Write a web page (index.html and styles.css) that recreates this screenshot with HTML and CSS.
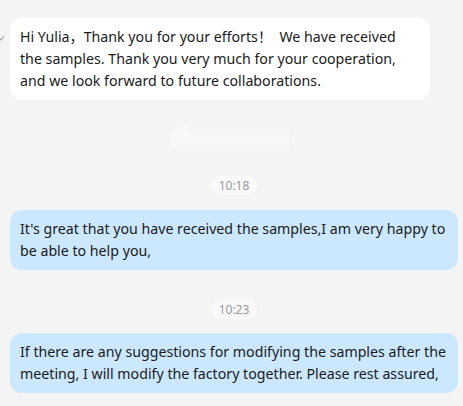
FILE: index.html
```html
<!DOCTYPE html>
<html>
<head>
<meta charset="utf-8">
<link rel="stylesheet" href="styles.css">
</head>
<body>
<div class="chat">
  <div class="row row-first">
    <div class="gutter"><svg class="caret" width="6" height="10" viewBox="0 0 6 10"><path d="M-2 3 L1 7 L4 3" fill="none" stroke="#aaa" stroke-width="1.2"/></svg></div>
    <div class="bubble in">Hi Yulia，Thank you for your efforts！&nbsp; We have received<br>the samples. Thank you very much for your cooperation,<br>and we look forward to future collaborations.</div>
  </div>
  <div class="ghost"><span class="ghost-tab"></span></div>
  <div class="time"><span>10:18</span></div>
  <div class="row">
    <div class="gutter"></div>
    <div class="bubble out">It's great that you have received the samples,I am very happy to<br>be able to help you,</div>
  </div>
  <div class="time time2"><span>10:23</span></div>
  <div class="row">
    <div class="gutter"></div>
    <div class="bubble out">If there are any suggestions for modifying the samples after the<br>meeting, I will modify the factory together. Please rest assured,</div>
  </div>
</div>
</body>
</html>
```
FILE: styles.css
```css
html, body {
  margin: 0;
  padding: 0;
  background: #f4f4f4;
}
body {
  width: 463px;
  height: 406px;
  overflow: hidden;
  font-family: "Noto Sans", "Noto Sans CJK SC", sans-serif;
  color: #1a1a1a;
}
.chat {
  display: flex;
  flex-direction: column;
  padding-top: 18px;
}
.row {
  display: flex;
}
.gutter {
  width: 10px;
  flex: none;
  position: relative;
}
.caret {
  position: absolute;
  left: 0;
  top: 15px;
}
.bubble {
  font-size: 14.2px;
  line-height: 22px;
  padding: 8px 10px;
  border-radius: 12px;
  white-space: nowrap;
}
.in {
  background: #ffffff;
  width: 400px;
}
.out {
  background: #cce8fe;
  width: 428px;
}
.ghost {
  align-self: center;
  margin-top: 30px;
  width: 120px;
  height: 20px;
  background: #f7f7f7;
  margin-left: -3px;
  position: relative;
}
.ghost-tab {
  position: absolute;
  left: 5px;
  top: -5px;
  width: 14px;
  height: 5px;
  background: #f7f7f7;
  border-radius: 4px 4px 0 0;
}
.time {
  display: flex;
  justify-content: center;
  margin-top: 26px;
  margin-bottom: 15px;
  padding-left: 5px;
}
.time span {
  background: #f9f9f9;
  color: #999999;
  font-size: 12px;
  line-height: 19px;
  padding: 0 8px;
  border-radius: 10px;
}
.time2 {
  margin-top: 30px;
  margin-bottom: 14px;
}
```
